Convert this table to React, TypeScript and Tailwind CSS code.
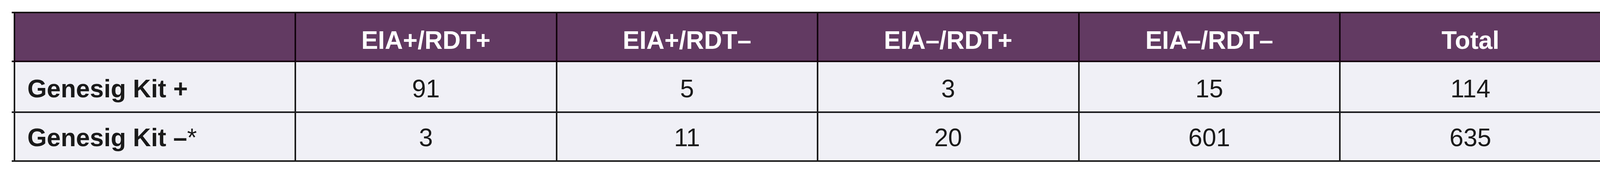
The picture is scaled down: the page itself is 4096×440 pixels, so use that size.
const headers = ["EIA+/RDT+", "EIA+/RDT–", "EIA–/RDT+", "EIA–/RDT–", "Total"]

const rows = [
  { label: "Genesig Kit +", star: false, values: ["91", "5", "3", "15", "114"], pad: "pt-[36px]", h: "h-[126px]" },
  { label: "Genesig Kit –", star: true, values: ["3", "11", "20", "601", "635"], pad: "pt-[31px]", h: "h-[121px]" },
]

function Rule({ color }: { color: string }) {
  return <div className={`h-[4px] w-full ${color}`} />
}

export default function App() {
  return (
    <div className="h-[440px] w-[4096px] overflow-hidden bg-white pt-[30px] pl-[30px] font-['Liberation_Sans',Arial,sans-serif] text-[64px] leading-none">
      <Rule color="bg-[#171314]" />
      <div className="flex h-[121px]">
        <div className="ml-[5px] w-[719px] shrink-0 border-l-4 border-[#12040d] bg-[#623a62]" />
        {headers.map((h) => (
          <div
            key={h}
            className="flex w-[668.5px] shrink-0 justify-center border-l-4 border-[#12040d] bg-[#623a62] pt-[37px] font-bold text-white"
          >
            {h}
          </div>
        ))}
      </div>
      <Rule color="bg-[#16050f]" />
      {rows.map((r, i) => (
        <div key={r.label}>
          <div className={`flex ${r.h}`}>
            <div className={`ml-[5px] w-[719px] shrink-0 border-l-4 border-[#1b1b1b] bg-[#f0f0f6] pl-[31px] ${r.pad} font-bold text-[#1a1a1a]`}>
              {r.label}
              {r.star && <span className="font-normal">*</span>}
            </div>
            {r.values.map((v, j) => (
              <div
                key={j}
                className={`flex w-[668.5px] shrink-0 justify-center border-l-4 border-[#1b1b1b] bg-[#f0f0f6] ${r.pad} text-[#1a1a1a]`}
              >
                {v}
              </div>
            ))}
          </div>
          <Rule color={i === 0 ? "bg-[#1c1c1e]" : "bg-[#1b1b1b]"} />
        </div>
      ))}
    </div>
  )
}
